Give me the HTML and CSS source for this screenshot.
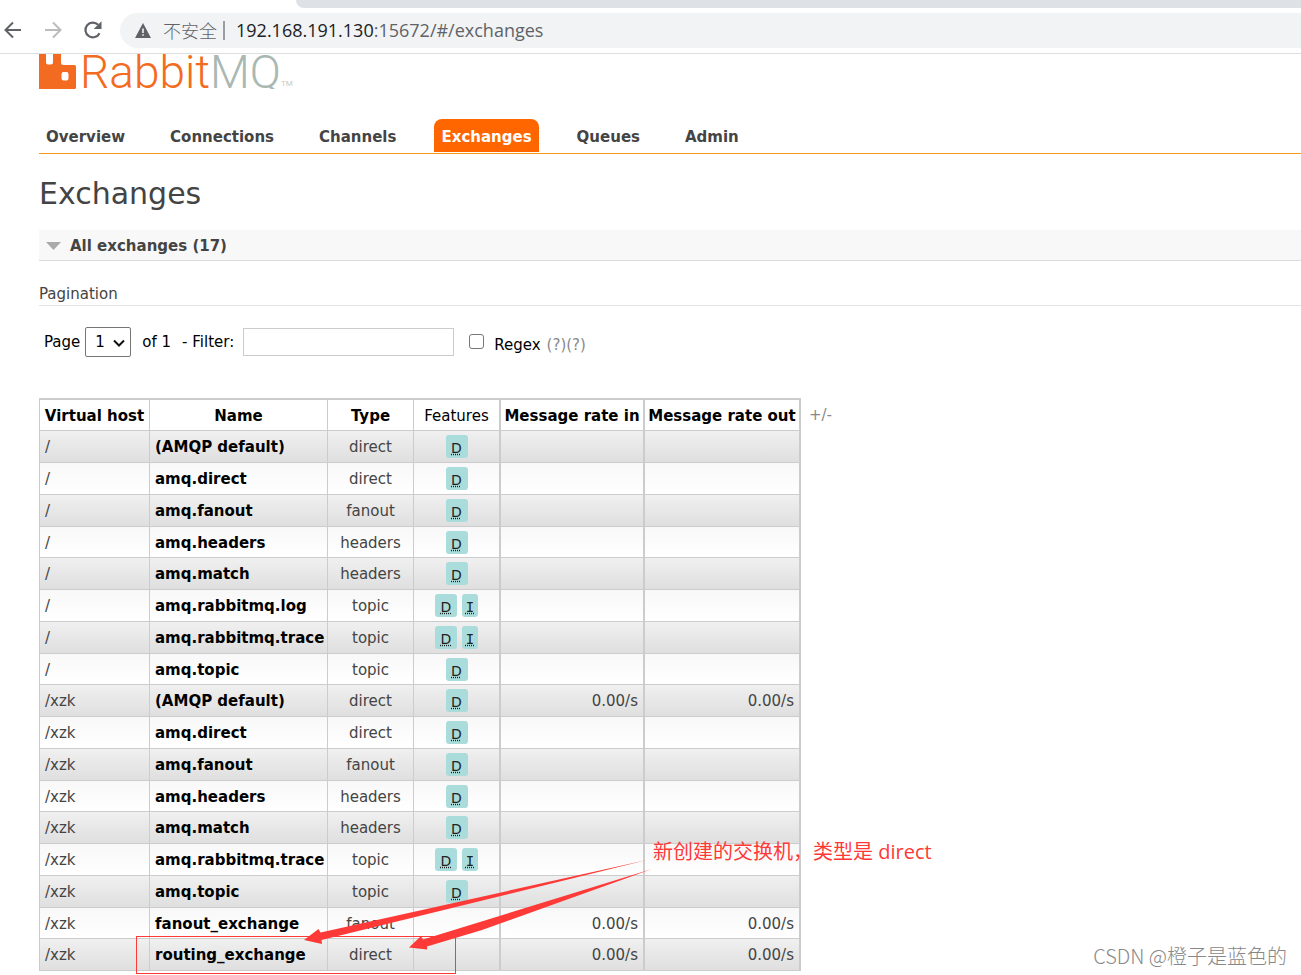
FILE: index.html
```html
<!DOCTYPE html>
<html lang="zh-CN">
<head>
<meta charset="utf-8">
<title>RabbitMQ Management</title>
<link rel="stylesheet" href="styles.css">
</head>
<body>
<header class="browser">
  <div class="tabstrip"></div>
  <div class="toolbar">
    <button class="nav-btn" aria-label="Back"><svg width="20" height="20" viewBox="0 0 20 20"><path d="M18 10H3M10 2.5L2.5 10l7.500 7.500" fill="none" stroke="#5f6368" stroke-width="2"/></svg></button>
    <button class="nav-btn" aria-label="Forward"><svg width="20" height="20" viewBox="0 0 20 20"><path d="M2 10h15M10 2.500L17.500 10 10 17.500" fill="none" stroke="#babcbe" stroke-width="2"/></svg></button>
    <button class="nav-btn" aria-label="Reload"><svg width="20" height="20" viewBox="0 0 20 20"><path d="M16.500 13.200A7.400 7.400 0 1 1 15.200 4.800" fill="none" stroke="#5f6368" stroke-width="2.200"/><path d="M18.500 1.200v7.800h-7.800z" fill="#5f6368"/></svg></button>
    <div class="omnibox">
      <svg width="16" height="15" viewBox="0 0 16 15"><path d="M8 0l8 15H0z" fill="#5f6368"/><path d="M7.200 5.500h1.600v4.500H7.200zM7.200 11.200h1.600v1.600H7.200z" fill="#f1f3f4"/></svg>
      <span class="insecure">不安全</span>
      <span class="divider"></span>
      <span class="url"><span class="host">192.168.191.130</span>:15672/#/exchanges</span>
    </div>
  </div>
</header>

<main class="page">
  <div class="logo">
    <svg class="logo-mark" width="37" height="35" viewBox="0 0 37 35"><path fill="#f36b21" fill-rule="evenodd" d="M0 0H7V8.500Q7 10.500 9 10.500H12Q14 10.500 14 8.500V0H22V8.500Q22 11 24.500 11H35.500Q37 11 37 12.500V33.500Q37 35 35.500 35H0ZM24.500 18Q22.500 18 22.500 20V24.500Q22.500 26.500 24.500 26.500H27.500Q29.500 26.500 29.500 24.500V20Q29.500 18 27.500 18Z"/></svg>
    <span class="logo-text">Rabbit<span class="logo-mq">MQ</span></span>
    <span class="tm">TM</span>
  </div>

  <nav class="tabs">
    <a href="#/">Overview</a>
    <a href="#/connections">Connections</a>
    <a href="#/channels">Channels</a>
    <a href="#/exchanges" class="selected">Exchanges</a>
    <a href="#/queues">Queues</a>
    <a href="#/users">Admin</a>
  </nav>

  <h1>Exchanges</h1>
  <h2 class="section"><svg width="15" height="8" viewBox="0 0 15 8"><path d="M0 0h15L7.500 8z" fill="#aaa"/></svg>All exchanges (17)</h2>

  <h3>Pagination</h3>
  <form class="filter">
    <label for="page">Page</label>
    <div class="select-wrap">
      <select id="page"><option>1</option></select>
      <svg width="12" height="8" viewBox="0 0 12 8"><path d="M1 1.500l5 5 5-5" fill="none" stroke="#111" stroke-width="2"/></svg>
    </div>
    <span class="of">of 1</span>
    <label class="filter-label" for="filter">- Filter:</label>
    <input type="text" id="filter">
    <input type="checkbox" id="regex">
    <label class="regex-label" for="regex">Regex</label>
    <span class="help"><a href="#/help">(?)</a><a href="#/help">(?)</a></span>
  </form>

  <div class="table-row">
    <table>
      <colgroup><col class="c-host"><col class="c-name"><col class="c-type"><col class="c-feat"><col class="c-in"><col class="c-out"></colgroup>
      <thead><tr><th>Virtual host</th><th>Name</th><th>Type</th><th class="plain">Features</th><th>Message rate in</th><th>Message rate out</th></tr></thead>
      <tbody>
        <tr><td>/</td><td><a href="#/e">(AMQP default)</a></td><td>direct</td><td><abbr>D</abbr></td><td></td><td></td></tr>
        <tr><td>/</td><td><a href="#/e">amq.direct</a></td><td>direct</td><td><abbr>D</abbr></td><td></td><td></td></tr>
        <tr><td>/</td><td><a href="#/e">amq.fanout</a></td><td>fanout</td><td><abbr>D</abbr></td><td></td><td></td></tr>
        <tr><td>/</td><td><a href="#/e">amq.headers</a></td><td>headers</td><td><abbr>D</abbr></td><td></td><td></td></tr>
        <tr><td>/</td><td><a href="#/e">amq.match</a></td><td>headers</td><td><abbr>D</abbr></td><td></td><td></td></tr>
        <tr><td>/</td><td><a href="#/e">amq.rabbitmq.log</a></td><td>topic</td><td><abbr>D</abbr> <abbr class="internal">I</abbr></td><td></td><td></td></tr>
        <tr><td>/</td><td><a href="#/e">amq.rabbitmq.trace</a></td><td>topic</td><td><abbr>D</abbr> <abbr class="internal">I</abbr></td><td></td><td></td></tr>
        <tr><td>/</td><td><a href="#/e">amq.topic</a></td><td>topic</td><td><abbr>D</abbr></td><td></td><td></td></tr>
        <tr><td>/xzk</td><td><a href="#/e">(AMQP default)</a></td><td>direct</td><td><abbr>D</abbr></td><td>0.00/s</td><td>0.00/s</td></tr>
        <tr><td>/xzk</td><td><a href="#/e">amq.direct</a></td><td>direct</td><td><abbr>D</abbr></td><td></td><td></td></tr>
        <tr><td>/xzk</td><td><a href="#/e">amq.fanout</a></td><td>fanout</td><td><abbr>D</abbr></td><td></td><td></td></tr>
        <tr><td>/xzk</td><td><a href="#/e">amq.headers</a></td><td>headers</td><td><abbr>D</abbr></td><td></td><td></td></tr>
        <tr><td>/xzk</td><td><a href="#/e">amq.match</a></td><td>headers</td><td><abbr>D</abbr></td><td></td><td></td></tr>
        <tr><td>/xzk</td><td><a href="#/e">amq.rabbitmq.trace</a></td><td>topic</td><td><abbr>D</abbr> <abbr class="internal">I</abbr></td><td></td><td></td></tr>
        <tr><td>/xzk</td><td><a href="#/e">amq.topic</a></td><td>topic</td><td><abbr>D</abbr></td><td></td><td></td></tr>
        <tr><td>/xzk</td><td><a href="#/e">fanout_exchange</a></td><td>fanout</td><td></td><td>0.00/s</td><td>0.00/s</td></tr>
        <tr><td>/xzk</td><td><a href="#/e">routing_exchange</a></td><td>direct</td><td></td><td>0.00/s</td><td>0.00/s</td></tr>
      </tbody>
    </table>
    <a class="columns-toggle" href="#/columns">+/-</a>
  </div>
</main>

<svg class="arrows" width="530" height="124" viewBox="130 850 530 124">
  <rect x="136.500" y="936.500" width="319" height="37" fill="none" stroke="#fd3a37" stroke-width="1"/>
  <path d="M647 860L320.500 932.500 318.500 929 304 940 322 944 321.500 940Z" fill="#fd3a37"/>
  <path d="M652 869L423 939.500 421 936 409 947.500 427 949.500 427 946.500 482 930Z" fill="#fd3a37"/>
</svg>
<p class="note">新创建的交换机，类型是 direct</p>
<p class="watermark">CSDN @橙子是蓝色的</p>
</body>
</html>
```
FILE: styles.css
```css
* { box-sizing: border-box; }
body {
  position: relative;
  margin: 0;
  min-height: 100vh;
  background: #fff;
  color: #444;
  font: 15px/18px "DejaVu Sans", Verdana, sans-serif;
}
a { color: inherit; text-decoration: none; }

.browser { border-bottom: 1px solid #dcdee0; }
.tabstrip { height: 8px; margin-left: 296px; background: #dee1e6; border-bottom-left-radius: 10px; }
.toolbar { display: flex; align-items: center; gap: 20px; padding: 5px 0 5px 3px; }
.nav-btn { display: flex; padding: 0 0 2px; border: 0; background: none; }
.omnibox {
  flex: 1;
  display: flex;
  align-items: center;
  height: 35px;
  margin-left: -3px;
  padding: 0 0 1px 15px;
  border-radius: 18px 0 0 18px;
  background: #f1f3f4;
  font: 18px/24px "Open Sans", "Noto Sans CJK SC", sans-serif;
  color: #5f6368;
}
.insecure { margin-left: 12px; font-family: "Noto Sans CJK SC", sans-serif; font-weight: 300; }
.divider { width: 2px; height: 19px; margin: 0 11px 0 6px; background: #9a9da1; }
.host { color: #202124; }

.page { padding-left: 39px; }
.logo { display: flex; height: 35px; overflow: hidden; align-items: flex-end; }
.logo-text { margin: 0 0 -11px 4px; font: 300 46px/56px Roboto, sans-serif; color: #f36b21; }
.logo-mq { color: #a9b8b2; }
.tm { font: 8px/10px Roboto, sans-serif; color: #c4ccc8; }

.tabs { display: flex; gap: 31px; margin-top: 30px; padding-bottom: 1px; border-bottom: 1px solid #f39a1c; }
.tabs a { padding: 9px 7px 6px; border-radius: 8px 8px 0 0; font-weight: bold; }
.tabs .selected { background: #f60; color: #fff; }

h1 { margin: 21px 0 18px; font-size: 30px; line-height: 37px; font-weight: normal; }
.section {
  display: flex;
  align-items: center;
  gap: 9px;
  margin: 0;
  padding: 7px 7px 5px;
  background: #f8f8f8;
  border-bottom: 1px solid #ddd;
  font-size: 15px;
}
h3 { margin: 24px 0 0; padding-bottom: 2px; border-bottom: 1px solid #e4e4e4; font-size: 15px; font-weight: normal; }

.filter { display: flex; align-items: center; margin: 21px 0 41px; padding-left: 5px; color: #000; }
.select-wrap { position: relative; margin-left: 5px; }
.select-wrap svg { position: absolute; right: 6px; top: 12px; pointer-events: none; }
select {
  display: block;
  appearance: none;
  width: 46px;
  height: 30px;
  padding: 0 9px;
  border: 1px solid #767676;
  border-radius: 2px;
  background: #fff;
  color: #000;
  font: inherit;
}
.of { margin-left: 11px; }
.filter-label { margin-left: 11px; }
#filter { width: 211px; height: 28px; margin-left: 9px; padding: 4px; border: 1px solid #ccc; font: inherit; }
#regex { appearance: none; width: 15px; height: 15px; margin: 0 10px 2px 15px; border: 1px solid #767676; border-radius: 3px; }
.regex-label, .help { padding-top: 5px; }
.help { margin-left: 6px; color: #888; }

.table-row { display: flex; align-items: flex-start; gap: 8px; }
table {
  table-layout: fixed;
  border-collapse: separate;
  border-spacing: 0;
  border-top: 2px solid #ccc;
  border-left: 1px solid #ccc;
  width: 762px;
}
.c-host { width: 110px; }
.c-name { width: 178px; }
.c-type { width: 86px; }
.c-feat { width: 87px; }
.c-in { width: 144px; }
.c-out { width: 156px; }
th, td { height: 32px; padding: 1px 5px 0; border: solid #ccc; border-width: 0 1px 1px 0; white-space: nowrap; }
th { height: 31px; padding: 2px 0 0; color: #000; }
th.plain { font-weight: normal; }
th:nth-child(n+4), td:nth-child(n+4) { border-right-width: 2px; }
tbody tr:nth-child(4n) td { height: 31px; }
tbody tr:nth-child(odd) td { background: linear-gradient(#f0f0f0, #dfdfdf); }
tbody tr:nth-child(even) td { background: linear-gradient(#f8f8f8, #fff); }
td:nth-child(2) { color: #000; font-weight: bold; }
td:nth-child(3), td:nth-child(4) { text-align: center; }
tbody td:nth-child(4) { padding-top: 0; }
td:nth-child(n+5) { text-align: right; }
abbr {
  display: inline-block;
  min-width: 22px;
  padding: 4px 4px 1px;
  border-radius: 3px;
  background: #aadcdc;
  color: #222;
  font-size: 14px;
  text-align: center;
  text-decoration: underline dotted;
}
abbr.internal { min-width: 16px; font-family: "DejaVu Sans Mono", monospace; }
.columns-toggle { margin-top: 8px; color: #888; }

.arrows { position: absolute; left: 130px; top: 850px; }
.note {
  position: absolute;
  left: 653px;
  top: 838px;
  margin: 0;
  font: 20px/28px "Open Sans", "Noto Sans CJK SC", sans-serif;
  color: #fd3a37;
}
.watermark {
  position: absolute;
  right: 14px;
  bottom: 5px;
  margin: 0;
  font: 300 20px/28px "Noto Sans CJK SC", sans-serif;
  color: #888;
}
```
